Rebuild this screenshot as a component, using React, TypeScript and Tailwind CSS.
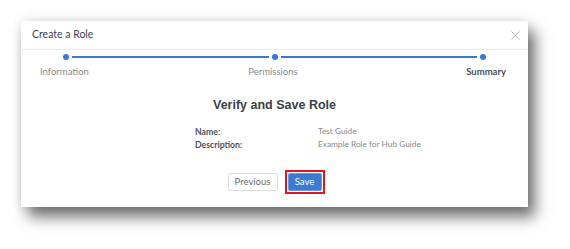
import { X } from "lucide-react";

const steps = ["Information", "Permissions", "Summary"];

export default function App() {
  return (
    <div className="h-[249px] w-[570px] overflow-hidden bg-white pl-[21px] pt-[21px] font-['Lato',sans-serif]">
      <div className="flex h-[186px] w-[507px] flex-col bg-white shadow-[0_0_10px_rgba(0,0,0,0.12),7px_10px_14px_rgba(0,0,0,0.55)]">
        {/* header */}
        <div className="flex h-[29px] shrink-0 items-center justify-between border-b border-[#e8e8e8] pl-[11px] pr-[5px]">
          <span className="text-[10.5px] text-[#3d4452]">Create a Role</span>
          <X className="h-[15px] w-[15px] text-[#8a8a8a]" strokeWidth={1} />
        </div>

        {/* stepper */}
        <div className="mt-[4px] flex h-[6px] items-center px-[42px]">
          <span className="h-[6px] w-[6px] rounded-full bg-[#3b78d2]" />
          <span className="mx-[3px] h-[2px] flex-1 bg-[#3b78d2]" />
          <span className="h-[6px] w-[6px] rounded-full bg-[#3b78d2]" />
          <span className="mx-[3px] h-[2px] flex-1 bg-[#3b78d2]" />
          <span className="h-[6px] w-[6px] rounded-full bg-[#3b78d2]" />
        </div>
        <div className="mt-[5px] grid grid-cols-3 pl-[19px] pr-[22px] text-[9.5px] leading-[14px]">
          {steps.map((s, i) => (
            <span
              key={s}
              className={
                i === 0
                  ? "text-left text-[#8a8a8a]"
                  : i === 1
                    ? "text-center text-[#8a8a8a]"
                    : "text-right font-bold text-[#4a505c]"
              }
            >
              {s}
            </span>
          ))}
        </div>

        {/* summary */}
        <h2 className="mt-[17px] text-center font-['Liberation_Sans',Arial,sans-serif] text-[12.5px] font-bold leading-[18px] text-[#3a3f4a]">
          Verify and Save Role
        </h2>
        <div className="mt-[11px] grid grid-cols-[123px_auto] pl-[174px] text-[8.7px] leading-[13px]">
          <span className="font-bold text-[#4a5262]">Name:</span>
          <span className="text-[8.3px] text-[#8a8a8a]">Test Guide</span>
          <span className="font-bold text-[#4a5262]">Description:</span>
          <span className="text-[8.3px] text-[#8a8a8a]">Example Role for Hub Guide</span>
        </div>

        {/* actions */}
        <div className="mt-[19px] flex items-center justify-center gap-[7px] pl-[3px]">
          <button className="h-[18px] w-[50px] rounded-[2px] border border-[#dcdcdc] bg-white text-[9.5px] text-[#6b6b6b]">
            Previous
          </button>
          <div className="border-2 border-[#e0161b] p-[1px]">
            <button className="block h-[18px] w-[34px] rounded-[2px] border border-[#6a9be0] bg-[#3d7bd3] text-[9.5px] text-white">
              Save
            </button>
          </div>
        </div>
      </div>
    </div>
  );
}
